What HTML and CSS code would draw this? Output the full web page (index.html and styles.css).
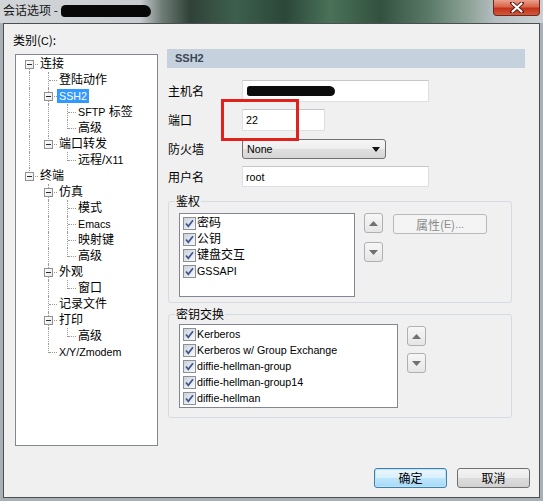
FILE: index.html
```html
<!DOCTYPE html>
<html lang="zh-CN">
<head>
<meta charset="utf-8">
<title>会话选项</title>
<link rel="stylesheet" href="styles.css">
</head>
<body>
<div class="titlebar">
  <span class="title">会话选项 -</span><span class="redact-title"></span>
  <div class="close">
    <svg width="14" height="11" viewBox="0 0 14 11"><path d="M2 1 L12 10 M12 1 L2 10" stroke="#5a1a10" stroke-width="4" stroke-linecap="round"/><path d="M2.5 1.5 L11.5 9.5 M11.5 1.5 L2.5 9.5" stroke="#ffffff" stroke-width="2.2" stroke-linecap="round"/></svg>
  </div>
</div>
<div class="client">
  <div class="main">
    <div class="left">
      <div class="cat">类别(<span class="lat">C</span>):</div>
      <div class="tree">
        <div class="row"><span class="c first"><span class="box"></span></span><span class="t">连接</span></div>
        <div class="row"><span class="c v"></span><span class="c tee"></span><span class="t">登陆动作</span></div>
        <div class="row"><span class="c v"></span><span class="c tee"><span class="box"></span></span><span class="t sel lat">SSH2</span></div>
        <div class="row"><span class="c v"></span><span class="c v"></span><span class="c tee"></span><span class="t"><span class="lat">SFTP</span> 标签</span></div>
        <div class="row"><span class="c v"></span><span class="c v"></span><span class="c end"></span><span class="t">高级</span></div>
        <div class="row"><span class="c v"></span><span class="c end"><span class="box"></span></span><span class="t">端口转发</span></div>
        <div class="row"><span class="c v"></span><span class="c"></span><span class="c end"></span><span class="t">远程/<span class="lat">X11</span></span></div>
        <div class="row"><span class="c end"><span class="box"></span></span><span class="t">终端</span></div>
        <div class="row"><span class="c"></span><span class="c tee"><span class="box"></span></span><span class="t">仿真</span></div>
        <div class="row"><span class="c"></span><span class="c v"></span><span class="c tee"></span><span class="t">模式</span></div>
        <div class="row"><span class="c"></span><span class="c v"></span><span class="c tee"></span><span class="t lat">Emacs</span></div>
        <div class="row"><span class="c"></span><span class="c v"></span><span class="c tee"></span><span class="t">映射键</span></div>
        <div class="row"><span class="c"></span><span class="c v"></span><span class="c end"></span><span class="t">高级</span></div>
        <div class="row"><span class="c"></span><span class="c tee"><span class="box"></span></span><span class="t">外观</span></div>
        <div class="row"><span class="c"></span><span class="c v"></span><span class="c end"></span><span class="t">窗口</span></div>
        <div class="row"><span class="c"></span><span class="c tee"></span><span class="t">记录文件</span></div>
        <div class="row"><span class="c"></span><span class="c tee"><span class="box"></span></span><span class="t">打印</span></div>
        <div class="row"><span class="c"></span><span class="c v"></span><span class="c end"></span><span class="t">高级</span></div>
        <div class="row"><span class="c"></span><span class="c end"></span><span class="t lat">X/Y/Zmodem</span></div>
      </div>
    </div>
    <div class="right">
      <div class="hdr">SSH2</div>
      <div class="frow r1"><span class="flabel">主机名</span><div class="tb host"><span class="redact"></span></div></div>
      <div class="frow r2"><span class="flabel">端口</span><div class="tb port lat">22</div></div>
      <div class="frow r3"><span class="flabel">防火墙</span><div class="combo"><span class="lat">None</span><svg width="8" height="5" viewBox="0 0 8 5"><path d="M0 0 H8 L4 5Z" fill="#111"/></svg></div></div>
      <div class="frow r4"><span class="flabel">用户名</span><div class="tb user lat">root</div></div>

      <fieldset class="group g1">
        <legend>鉴权</legend>
        <div class="grow">
          <div class="list l1">
            <div class="li"><span class="cb"><svg width="11" height="11" viewBox="0 0 11 11"><path d="M2 5.5 L4.3 8.3 L9 2.2" fill="none" stroke="#3f5590" stroke-width="1.7"/></svg></span><span>密码</span></div>
            <div class="li"><span class="cb"><svg width="11" height="11" viewBox="0 0 11 11"><path d="M2 5.5 L4.3 8.3 L9 2.2" fill="none" stroke="#3f5590" stroke-width="1.7"/></svg></span><span>公钥</span></div>
            <div class="li"><span class="cb"><svg width="11" height="11" viewBox="0 0 11 11"><path d="M2 5.5 L4.3 8.3 L9 2.2" fill="none" stroke="#3f5590" stroke-width="1.7"/></svg></span><span>键盘交互</span></div>
            <div class="li"><span class="cb"><svg width="11" height="11" viewBox="0 0 11 11"><path d="M2 5.5 L4.3 8.3 L9 2.2" fill="none" stroke="#3f5590" stroke-width="1.7"/></svg></span><span class="lat">GSSAPI</span></div>
          </div>
          <div class="spins s1">
            <div class="spin"><svg width="9" height="5" viewBox="0 0 9 5"><path d="M0 5 L4.5 0 L9 5Z" fill="#707070"/></svg></div>
            <div class="spin"><svg width="9" height="5" viewBox="0 0 9 5"><path d="M0 0 L9 0 L4.5 5Z" fill="#707070"/></svg></div>
          </div>
          <div class="prop">属性(<span class="lat">E</span>)<span class="lat">...</span></div>
        </div>
      </fieldset>

      <fieldset class="group g2">
        <legend>密钥交换</legend>
        <div class="grow">
          <div class="list l2">
            <div class="li"><span class="cb"><svg width="11" height="11" viewBox="0 0 11 11"><path d="M2 5.5 L4.3 8.3 L9 2.2" fill="none" stroke="#3f5590" stroke-width="1.7"/></svg></span><span class="lat">Kerberos</span></div>
            <div class="li"><span class="cb"><svg width="11" height="11" viewBox="0 0 11 11"><path d="M2 5.5 L4.3 8.3 L9 2.2" fill="none" stroke="#3f5590" stroke-width="1.7"/></svg></span><span class="lat">Kerberos w/ Group Exchange</span></div>
            <div class="li"><span class="cb"><svg width="11" height="11" viewBox="0 0 11 11"><path d="M2 5.5 L4.3 8.3 L9 2.2" fill="none" stroke="#3f5590" stroke-width="1.7"/></svg></span><span class="lat">diffie-hellman-group</span></div>
            <div class="li"><span class="cb"><svg width="11" height="11" viewBox="0 0 11 11"><path d="M2 5.5 L4.3 8.3 L9 2.2" fill="none" stroke="#3f5590" stroke-width="1.7"/></svg></span><span class="lat">diffie-hellman-group14</span></div>
            <div class="li"><span class="cb"><svg width="11" height="11" viewBox="0 0 11 11"><path d="M2 5.5 L4.3 8.3 L9 2.2" fill="none" stroke="#3f5590" stroke-width="1.7"/></svg></span><span class="lat">diffie-hellman</span></div>
          </div>
          <div class="spins s2">
            <div class="spin"><svg width="9" height="5" viewBox="0 0 9 5"><path d="M0 5 L4.5 0 L9 5Z" fill="#707070"/></svg></div>
            <div class="spin"><svg width="9" height="5" viewBox="0 0 9 5"><path d="M0 0 L9 0 L4.5 5Z" fill="#707070"/></svg></div>
          </div>
        </div>
      </fieldset>
    </div>
  </div>
  <div class="footer">
    <button class="btn default">确定</button>
    <button class="btn">取消</button>
  </div>
  <div class="annot"></div>
</div>
</body>
</html>
```

FILE: styles.css
```css
html, body {
  margin: 0;
  padding: 0;
}
body {
  width: 543px;
  height: 501px;
  overflow: hidden;
  background: #a9b0b5;
  font-family: "Liberation Sans", "Noto Sans CJK SC", sans-serif;
  font-size: 12px;
  color: #000;
}
.lat {
  font-family: "Liberation Sans", sans-serif;
  font-size: 10.7px;
}

/* title bar */
.titlebar {
  height: 23px;
  display: flex;
  align-items: flex-start;
  background: linear-gradient(to right, #d3d6d9 0, #c8ccd0 140px, #6f7d76 162px, #2f4238 190px, #3e5f4c 235px, #2b4739 285px, #4a7258 330px, #33513f 380px, #5b7b68 430px, #8fa499 470px, #b5bec1 495px, #cdd1d4 543px);
}
.title {
  margin-left: 3px;
  line-height: 20px;
  font-size: 12px;
  color: #151515;
  font-family: "Noto Sans CJK SC", sans-serif;
}
.redact-title {
  width: 90px;
  height: 12px;
  margin: 5px 0 0 3px;
  background: #080808;
  border-radius: 6px 9px 7px 5px;
}
.close {
  margin-left: auto;
  margin-right: 3px;
  width: 47px;
  height: 16px;
  box-sizing: border-box;
  border: 1px solid #6b2a20;
  border-top: none;
  border-radius: 0 0 4px 4px;
  background: linear-gradient(#e9a08e 0, #d9664b 45%, #c2321a 55%, #d25a3c 100%);
  display: flex;
  align-items: center;
  justify-content: center;
}

/* client */
.client {
  position: relative;
  margin: 0 3px;
  height: 475px;
  box-sizing: border-box;
  border: 1px solid #4b4f52;
  background: #f0f0f0;
  display: flex;
  flex-direction: column;
}
.main {
  display: flex;
}
.left {
  width: 154px;
  flex: none;
}
.cat {
  margin: 8px 0 0 9px;
  line-height: 16px;
  font-family: "Noto Sans CJK SC", sans-serif;
}
.tree {
  margin: 5px 0 0 11px;
  width: 143px;
  height: 392px;
  box-sizing: border-box;
  border: 1px solid #828790;
  background: #fff;
  padding: 1px 0 0 3px;
}
.row {
  display: flex;
  align-items: center;
  height: 16px;
}
.c {
  position: relative;
  flex: none;
  width: 19px;
  height: 16px;
}
.v::before, .tee::before, .end::before, .first::before {
  content: "";
  position: absolute;
  left: 10px;
  top: 0;
  height: 16px;
  border-left: 1px dotted #9a9a9a;
}
.end::before { height: 9px; }
.first::before { top: 8px; height: 8px; }
.tee::after, .end::after, .first::after {
  content: "";
  position: absolute;
  left: 11px;
  top: 8px;
  width: 8px;
  border-top: 1px dotted #9a9a9a;
}
.box {
  position: absolute;
  left: 6px;
  top: 4px;
  width: 9px;
  height: 9px;
  box-sizing: border-box;
  border: 1px solid #919191;
  background: linear-gradient(135deg, #ffffff, #e8e8e8);
  z-index: 1;
}
.box::after {
  content: "";
  position: absolute;
  left: 1px;
  top: 3px;
  width: 5px;
  height: 1px;
  background: #2a2a2a;
}
.t {
  padding: 0 2px;
  line-height: 14px;
  white-space: nowrap;
}
.t.sel {
  background: #3399ff;
  color: #fff;
}

/* right column */
.right {
  margin-left: 9px;
  width: 358px;
}
.hdr {
  margin-top: 25px;
  height: 19px;
  line-height: 19px;
  padding-left: 8px;
  background: #c5d2de;
  color: #3a4755;
  font-weight: bold;
  font-size: 11px;
}
.frow {
  display: flex;
  align-items: center;
}
.r1 { margin-top: 12px; }
.r2 { margin-top: 7px; }
.r3 { margin-top: 8px; }
.r4 { margin-top: 7px; }
.flabel {
  width: 75px;
  padding-left: 1px;
  box-sizing: border-box;
  flex: none;
  font-family: "Noto Sans CJK SC", sans-serif;
  line-height: 16px;
}
.tb {
  height: 22px;
  box-sizing: border-box;
  border: 1px solid #dcdfe4;
  border-top-color: #c3c6cb;
  background: #fff;
  padding-left: 3px;
  display: flex;
  align-items: center;
}
.host { width: 187px; }
.port { width: 83px; }
.user { width: 187px; height: 21px; }
.redact {
  width: 88px;
  height: 10px;
  margin-left: 1px;
  background: #0c0c0c;
  border-radius: 3px 6px 5px 3px;
}
.combo {
  width: 144px;
  height: 20px;
  box-sizing: border-box;
  border: 1px solid #707070;
  border-radius: 3px;
  background: linear-gradient(#f6f6f6 0, #ededed 50%, #e0e0e0 51%, #d6d6d6 100%);
  padding: 0 5px 0 4px;
  display: flex;
  align-items: center;
  justify-content: space-between;
}

/* groups */
.group {
  margin: 0 0 0 1px;
  padding: 0;
  width: 344px;
  min-width: 0;
  box-sizing: border-box;
  border: 1px solid #d5dbe0;
  border-radius: 3px;
}
.g1 { margin-top: 6px; }
.g2 { margin-top: 3px; }
.group legend {
  margin-left: 6px;
  padding: 0 1px;
  line-height: 16px;
  font-family: "Noto Sans CJK SC", sans-serif;
}
.grow {
  display: flex;
  align-items: flex-start;
  margin-left: 10px;
}
.g1 .grow { margin-top: 4px; margin-bottom: 5px; }
.g2 .grow { margin-top: 2px; margin-bottom: 9px; }
.list {
  flex: none;
  height: 84px;
  box-sizing: border-box;
  border: 1px solid #828790;
  background: #fff;
  padding-top: 1px;
}
.l1 { width: 176px; }
.l2 { width: 219px; }
.li {
  display: flex;
  align-items: center;
  height: 16px;
  padding-left: 3px;
  white-space: nowrap;
}
.li span:last-child {
  line-height: 16px;
}
.cb {
  width: 13px;
  height: 13px;
  box-sizing: border-box;
  border: 1px solid #8e8f8f;
  background: linear-gradient(135deg, #c9d1dc 0, #e6ebf2 60%, #f6f8fb 100%);
  margin-right: 1px;
  display: flex;
  align-items: center;
  justify-content: center;
  flex: none;
}
.spins {
  display: flex;
  flex-direction: column;
  margin-left: 9px;
}
.s1 { gap: 9px; }
.s2 { gap: 7px; margin-top: 2px; }
.spin {
  width: 19px;
  height: 20px;
  box-sizing: border-box;
  border: 1px solid #b0b0b0;
  border-radius: 3px;
  background: linear-gradient(#f7f7f7, #e6e6e6);
  display: flex;
  align-items: center;
  justify-content: center;
}
.prop {
  margin: 1px 0 0 10px;
  width: 94px;
  height: 20px;
  box-sizing: border-box;
  border: 1px solid #b5b9bc;
  border-radius: 3px;
  background: #f4f4f4;
  color: #8a8a8a;
  display: flex;
  align-items: center;
  justify-content: center;
  font-family: "Noto Sans CJK SC", sans-serif;
}

/* footer */
.footer {
  display: flex;
  justify-content: flex-end;
  gap: 10px;
  margin-top: 22px;
  padding-right: 9px;
}
.btn {
  width: 73px;
  height: 20px;
  margin: 0;
  padding: 0;
  box-sizing: border-box;
  border: 1px solid #707070;
  border-radius: 3px;
  background: linear-gradient(#f3f3f3 0, #ebebeb 50%, #dddddd 51%, #d1d1d1 100%);
  font-family: "Noto Sans CJK SC", sans-serif;
  font-size: 12px;
  color: #000;
  line-height: 16px;
}
.btn.default {
  border-color: #3c7fb1;
  background: linear-gradient(#eaf6fd 0, #d9f0fc 50%, #bee6fd 51%, #a7d9f5 100%);
  box-shadow: inset 0 0 0 1px #bfe4f8;
}

/* red annotation box */
.annot {
  position: absolute;
  left: 217px;
  top: 75px;
  width: 78px;
  height: 42px;
  box-sizing: border-box;
  border: 3px solid #e1221c;
}
```
